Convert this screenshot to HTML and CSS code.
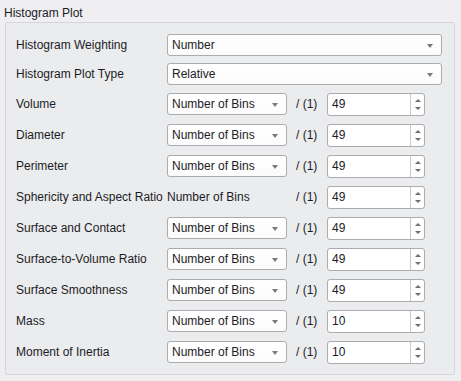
FILE: index.html
```html
<!DOCTYPE html>
<html lang="en">
<head>
    <meta charset="UTF-8">
    <title>Histogram Plot</title>
    <link rel="stylesheet" href="styles.css">
</head>
<body>
    <div class="title">Histogram Plot</div>
    <div class="group">
        <div class="row first">
            <span class="label">Histogram Weighting</span>
            <div class="combo wide"><span>Number</span><i class="arrow"></i></div>
        </div>
        <div class="row second">
            <span class="label">Histogram Plot Type</span>
            <div class="combo wide"><span>Relative</span><i class="arrow"></i></div>
        </div>
        <div class="row third">
            <span class="label">Volume</span>
            <div class="combo small"><span>Number of Bins</span><i class="arrow"></i></div>
            <span class="unit">/ (1)</span>
            <div class="spin"><span>49</span><div class="btns"><i class="up"></i><i class="down"></i></div></div>
        </div>
        <div class="row">
            <span class="label">Diameter</span>
            <div class="combo small"><span>Number of Bins</span><i class="arrow"></i></div>
            <span class="unit">/ (1)</span>
            <div class="spin"><span>49</span><div class="btns"><i class="up"></i><i class="down"></i></div></div>
        </div>
        <div class="row">
            <span class="label">Perimeter</span>
            <div class="combo small"><span>Number of Bins</span><i class="arrow"></i></div>
            <span class="unit">/ (1)</span>
            <div class="spin"><span>49</span><div class="btns"><i class="up"></i><i class="down"></i></div></div>
        </div>
        <div class="row">
            <span class="label">Sphericity and Aspect Ratio</span>
            <div class="plain">Number of Bins</div>
            <span class="unit">/ (1)</span>
            <div class="spin"><span>49</span><div class="btns"><i class="up"></i><i class="down"></i></div></div>
        </div>
        <div class="row">
            <span class="label">Surface and Contact</span>
            <div class="combo small"><span>Number of Bins</span><i class="arrow"></i></div>
            <span class="unit">/ (1)</span>
            <div class="spin"><span>49</span><div class="btns"><i class="up"></i><i class="down"></i></div></div>
        </div>
        <div class="row">
            <span class="label">Surface-to-Volume Ratio</span>
            <div class="combo small"><span>Number of Bins</span><i class="arrow"></i></div>
            <span class="unit">/ (1)</span>
            <div class="spin"><span>49</span><div class="btns"><i class="up"></i><i class="down"></i></div></div>
        </div>
        <div class="row">
            <span class="label">Surface Smoothness</span>
            <div class="combo small"><span>Number of Bins</span><i class="arrow"></i></div>
            <span class="unit">/ (1)</span>
            <div class="spin"><span>49</span><div class="btns"><i class="up"></i><i class="down"></i></div></div>
        </div>
        <div class="row">
            <span class="label">Mass</span>
            <div class="combo small"><span>Number of Bins</span><i class="arrow"></i></div>
            <span class="unit">/ (1)</span>
            <div class="spin"><span>10</span><div class="btns"><i class="up"></i><i class="down"></i></div></div>
        </div>
        <div class="row">
            <span class="label">Moment of Inertia</span>
            <div class="combo small"><span>Number of Bins</span><i class="arrow"></i></div>
            <span class="unit">/ (1)</span>
            <div class="spin"><span>10</span><div class="btns"><i class="up"></i><i class="down"></i></div></div>
        </div>
    </div>
</body>
</html>
```

FILE: styles.css
```css
body {
    margin: 0;
    background-color: #efeff1;
    font-family: "Liberation Sans", Arial, sans-serif;
    font-size: 12px;
    color: #1c1c26;
}
.title {
    padding: 6px 0 0 4px;
    line-height: 15px;
}
.group {
    margin: 1px 6px 0 5px;
    height: 353px;
    box-sizing: border-box;
    border: 1px solid #d6d6d8;
    border-radius: 2px;
    background-color: #ebecee;
    padding: 11px 0 0 10px;
    display: flex;
    flex-direction: column;
}
.row {
    display: flex;
    align-items: center;
    height: 22px;
    margin-top: 9px;
}
.row.first {
    margin-top: 0;
}
.row.second {
    margin-top: 7px;
}
.row.third {
    margin-top: 8px;
}
.label {
    width: 151px;
    flex: none;
    white-space: nowrap;
}
.combo {
    position: relative;
    height: 22px;
    box-sizing: border-box;
    border: 1px solid #acacae;
    border-radius: 3px;
    background: linear-gradient(#ffffff, #fbfbfb);
    padding-left: 4px;
    line-height: 20px;
    white-space: nowrap;
}
.combo.wide {
    width: 275px;
}
.combo.small {
    width: 120px;
}
.arrow {
    position: absolute;
    right: 8px;
    top: 9px;
    width: 0;
    height: 0;
    border-left: 3.5px solid transparent;
    border-right: 3.5px solid transparent;
    border-top: 4px solid #7a7a7c;
}
.plain {
    width: 120px;
    white-space: nowrap;
}
.unit {
    width: 31px;
    margin-left: 9px;
    box-sizing: border-box;
    white-space: nowrap;
}
.spin {
    display: flex;
    width: 98px;
    height: 23px;
    box-sizing: border-box;
    border: 1px solid #acacae;
    border-radius: 3px;
    background-color: #fff;
    line-height: 21px;
}
.spin span {
    flex: 1;
    padding-left: 4px;
}
.btns {
    width: 13px;
    border-left: 1px solid #c8c8ca;
    display: flex;
    flex-direction: column;
    align-items: center;
    justify-content: center;
    gap: 5px;
}
.up, .down {
    width: 0;
    height: 0;
    border-left: 3px solid transparent;
    border-right: 3px solid transparent;
}
.up {
    border-bottom: 3px solid #6f6f71;
}
.down {
    border-top: 3px solid #6f6f71;
}
```
